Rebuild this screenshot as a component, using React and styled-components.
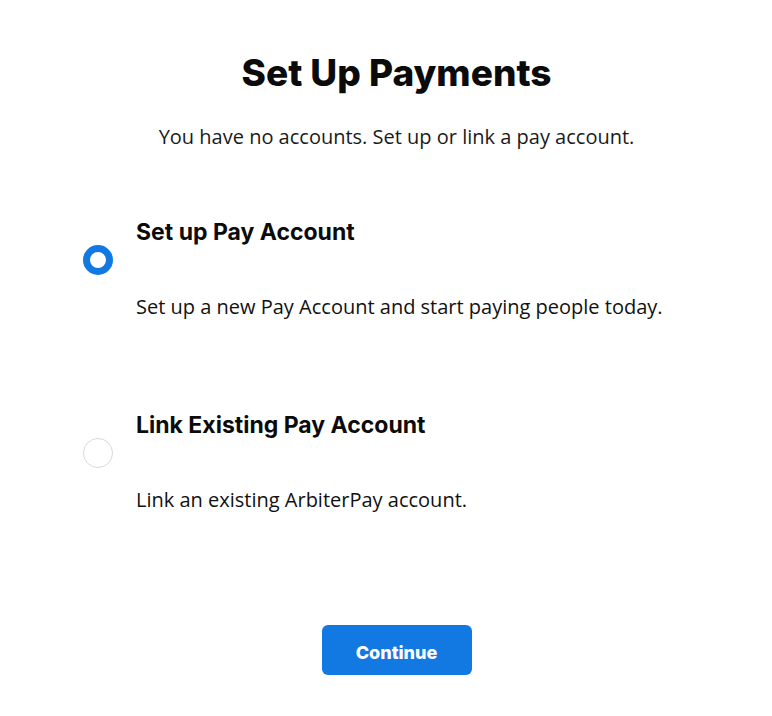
import React, { useState } from 'react'
import styled, { createGlobalStyle } from 'styled-components'

const GlobalStyle = createGlobalStyle`
  body {
    margin: 0;
    background: #fff;
    font-family: "Open Sans", "Liberation Sans", sans-serif;
    color: #111;
  }
`

const Page = styled.div`
  box-sizing: border-box;
  display: flex;
  flex-direction: column;
  align-items: center;
  padding: 51px 0 0 21px;
  width: 772px;
`

const Title = styled.h1`
  margin: 0;
  font-family: "Inter", "Liberation Sans", sans-serif;
  font-weight: 800;
  font-size: 37px;
  line-height: 44px;
  color: #0b0b0b;
`

const Subtitle = styled.p`
  margin: 30px 0 0;
  font-size: 20px;
  line-height: 24px;
  color: #1a1a1a;
`

const Options = styled.div`
  align-self: stretch;
  display: flex;
  flex-direction: column;
  gap: 93px;
  margin-top: 70px;
  padding-left: 62px;
`

const Option = styled.label`
  display: flex;
  align-items: flex-start;
  gap: 23px;
  cursor: pointer;
`

const Radio = styled.span`
  flex: none;
  box-sizing: border-box;
  width: 30px;
  height: 30px;
  margin-top: 26px;
  border-radius: 50%;
  border: ${p => (p.$checked ? '7px solid #1279e3' : '1px solid #d9d9d9')};
  background: #fff;
`

const OptionText = styled.div`
  display: flex;
  flex-direction: column;
  gap: 50px;
`

const OptionTitle = styled.div`
  font-family: "Inter", "Liberation Sans", sans-serif;
  font-weight: 700;
  font-size: 23px;
  line-height: 26px;
  color: #0b0b0b;
`

const OptionDesc = styled.div`
  font-size: 20px;
  line-height: 24px;
  color: #111;
`

const ContinueButton = styled.button`
  margin-top: 113px;
  width: 150px;
  height: 50px;
  padding: 4px 0 0;
  border: none;
  border-radius: 6px;
  background: #1279e3;
  color: #fff;
  font-family: "Inter", "Liberation Sans", sans-serif;
  font-weight: 800;
  font-size: 18px;
  cursor: pointer;
`

const options = [
  { id: 'setup', title: 'Set up Pay Account', desc: 'Set up a new Pay Account and start paying people today.' },
  { id: 'link', title: 'Link Existing Pay Account', desc: 'Link an existing ArbiterPay account.' },
]

export default function App() {
  const [selected, setSelected] = useState('setup')

  return (
    <>
      <GlobalStyle />
      <Page>
        <Title>Set Up Payments</Title>
        <Subtitle>You have no accounts. Set up or link a pay account.</Subtitle>
        <Options>
          {options.map(o => (
            <Option key={o.id} onClick={() => setSelected(o.id)}>
              <Radio $checked={selected === o.id} />
              <OptionText>
                <OptionTitle>{o.title}</OptionTitle>
                <OptionDesc>{o.desc}</OptionDesc>
              </OptionText>
            </Option>
          ))}
        </Options>
        <ContinueButton>Continue</ContinueButton>
      </Page>
    </>
  )
}
